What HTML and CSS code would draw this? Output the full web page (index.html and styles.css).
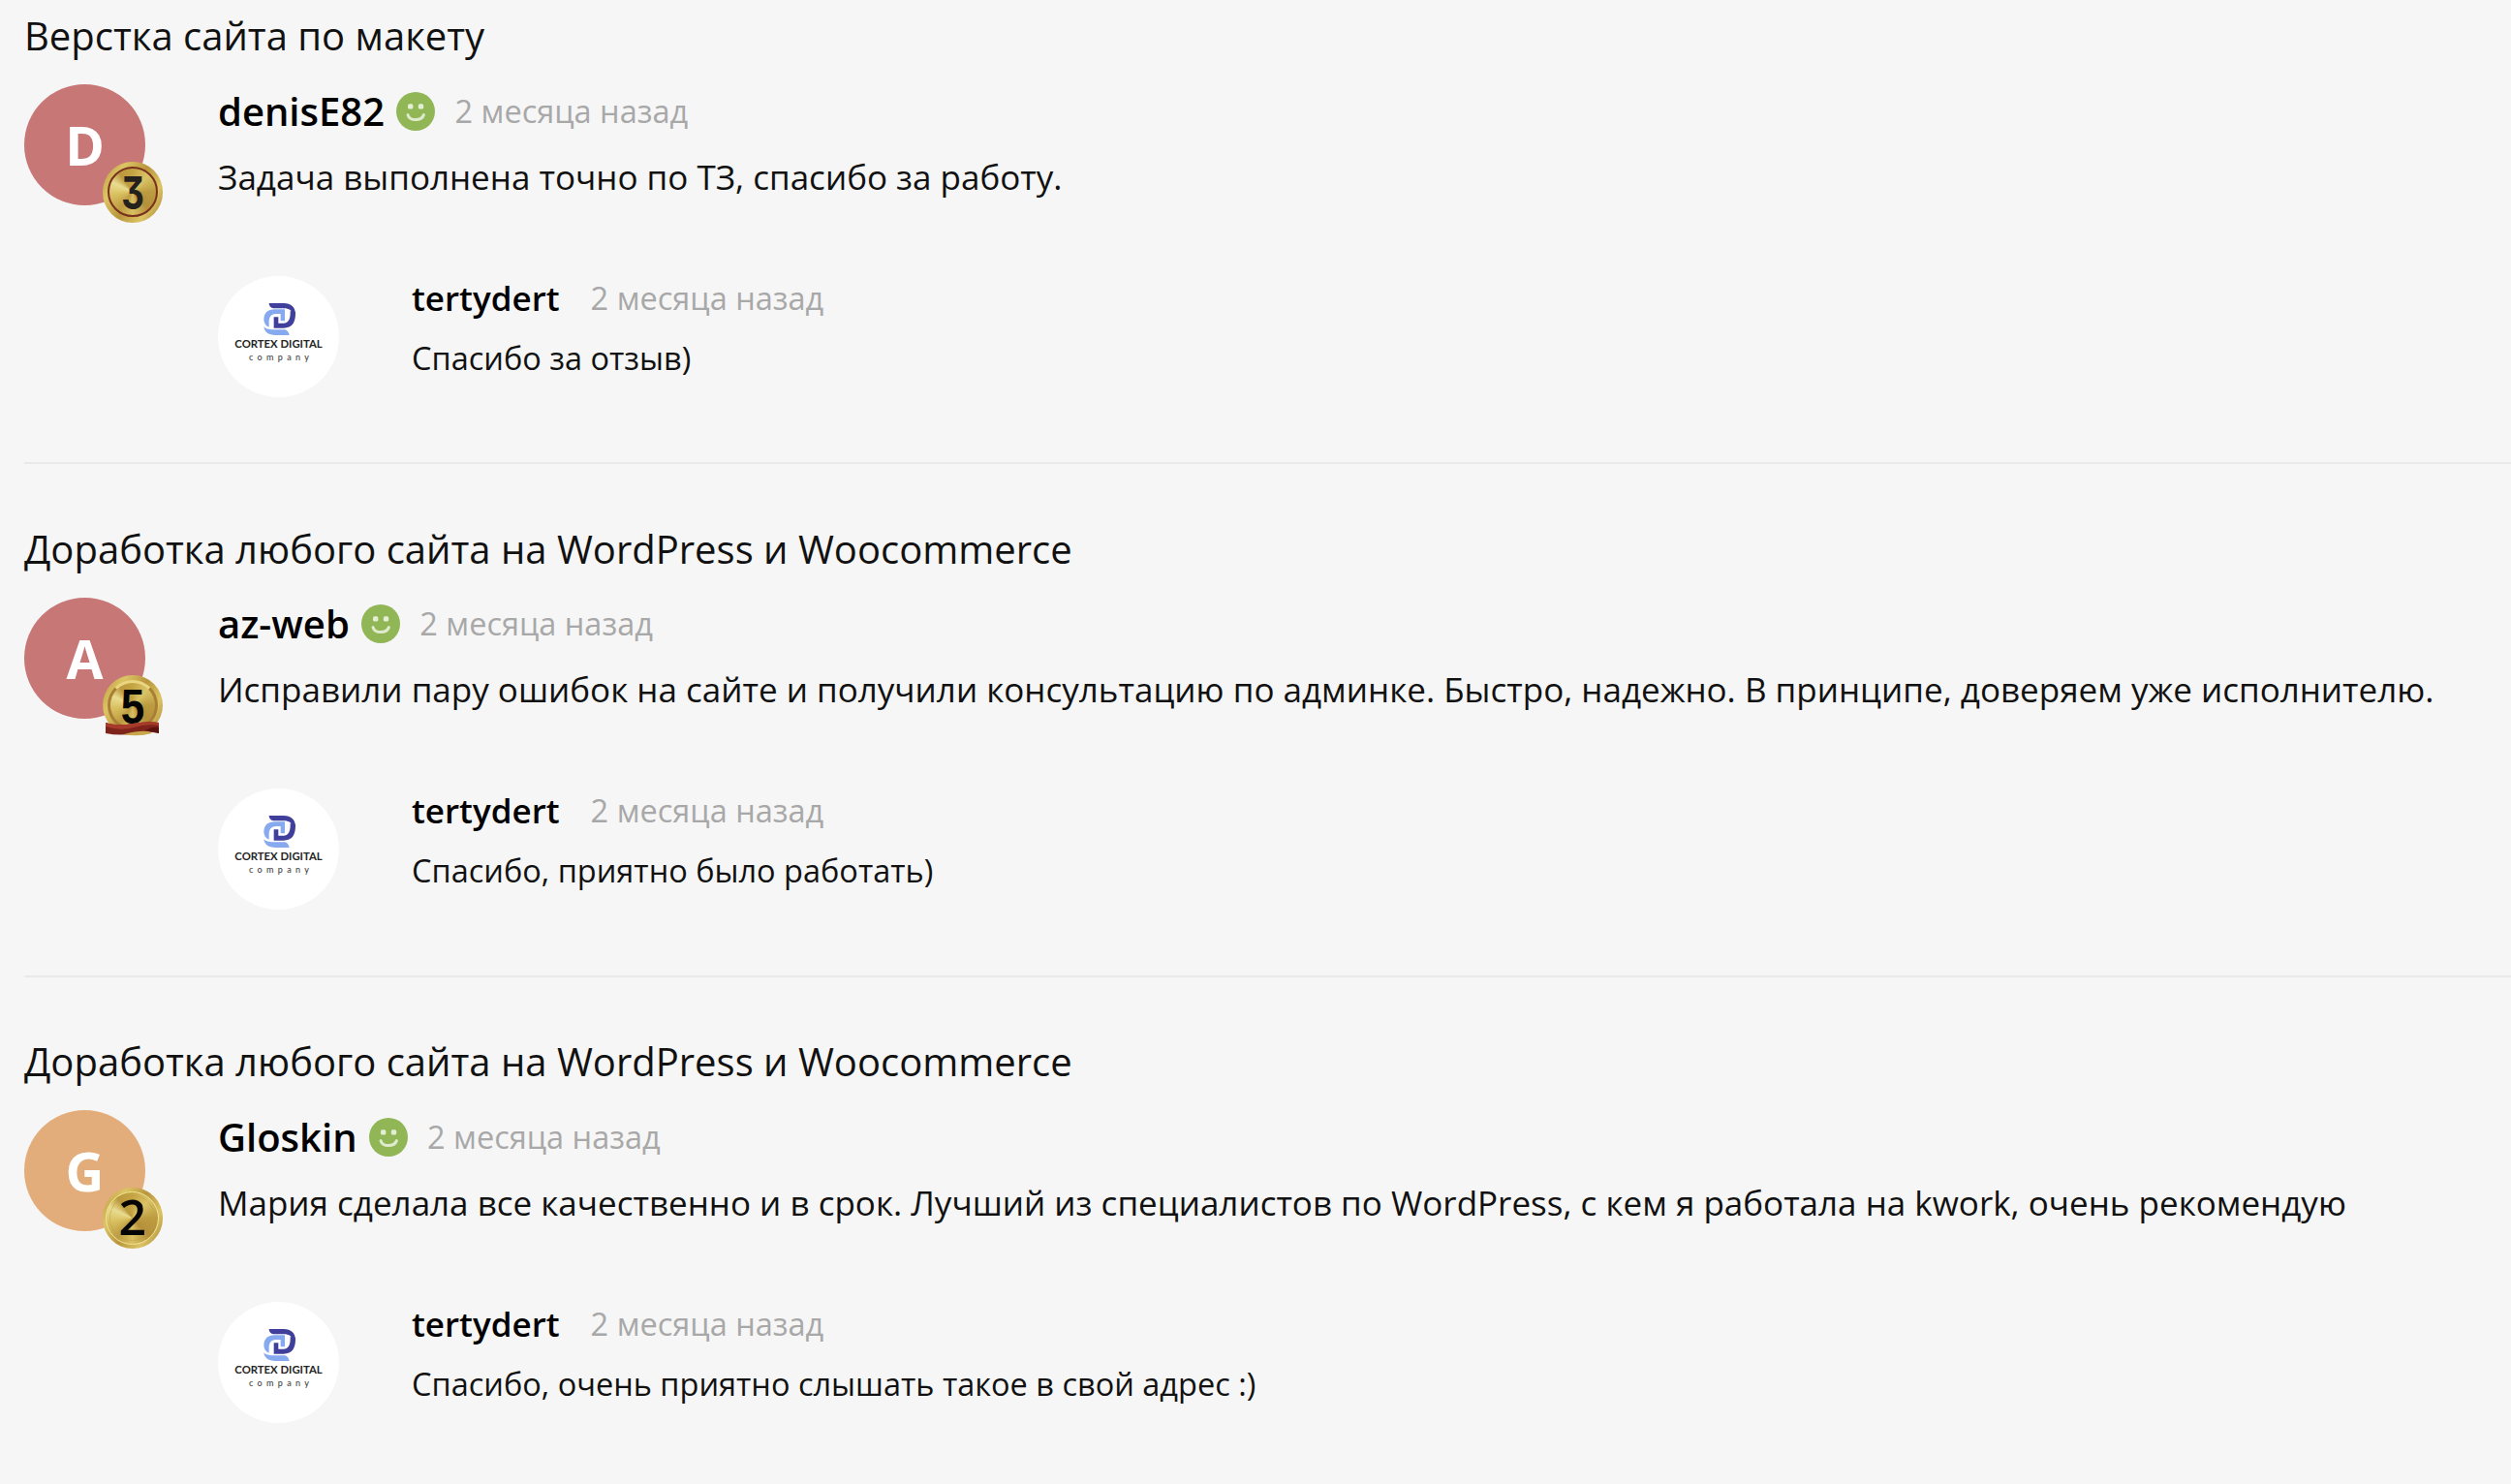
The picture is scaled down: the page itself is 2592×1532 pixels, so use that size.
FILE: index.html
```
<!DOCTYPE html>
<html lang="ru">
<head>
<meta charset="utf-8">
<title>Отзывы</title>
<link rel="stylesheet" href="styles.css">
</head>
<body>
<svg class="sprite" aria-hidden="true">
  <symbol id="smile" viewBox="0 0 40 40">
    <circle cx="20" cy="20" r="20" fill="#90b656"/>
    <g fill="#e3eed2"><rect x="12" y="12.3" width="5.4" height="5.2" rx="1.6"/><rect x="22.8" y="12.3" width="5.4" height="5.2" rx="1.6"/></g>
    <path d="M12 23.6Q13.5 28.6 20 28.6T28.4 23.6" fill="none" stroke="#dfebcc" stroke-width="3" stroke-linecap="round"/>
  </symbol>
  <symbol id="logo" viewBox="0 0 375 375">
    <circle cx="187.500" cy="187.500" r="187.500" fill="#fff"/>
    <path d="M158 84H204C226 84 240 96 240 118H231C228 107 221 100 204 100H176C164 100 158 93 158 84Z" fill="#40409c"/>
    <path d="M240 112C241 144 230 161 203 161H173V127H187V146H203C217 146 225 136 224 108Z" fill="#40409c"/>
    <path d="M207 103V139H194V117H180C166 117 158 125 158 142V158C148 154 142 145 142 134C143 113 155 103 176 103Z" fill="#87a9ef"/>
    <path d="M142 157C148 164 158 166 168 166H205C214 166 219 174 221 183H178C157 183 144 174 142 157Z" fill="#87a9ef"/>
    <text class="logo-name" x="52" y="223" textLength="271" lengthAdjust="spacingAndGlyphs">CORTEX DIGITAL</text>
    <text class="logo-sub" x="96" y="260" textLength="186">company</text>
  </symbol>
  <symbol id="ribbon" viewBox="0 0 63 63">
    <path d="M3 49Q15 53 31 50T58 49V60Q45 57 32 60T3 60Z" fill="#7e241a"/>
    <path d="M3 49Q15 53 31 50T58 49V52Q45 50 32 54T3 53Z" fill="#a63b2b"/>
    <path d="M43 58Q50 53 58 54V60Q50 57 43 58Z" fill="#5b130f"/>
    <path d="M22 61Q37 57 47 58L51 60Q36 64 22 61Z" fill="#c8a64c"/>
  </symbol>
</svg>

<main class="reviews">
  <article class="review">
    <h2 class="title">Верстка сайта по макету</h2>
    <div class="entry">
      <div class="avatar avatar-red">D
        <span class="medal medal-three"><span class="medal-face"><span class="digit">3</span></span></span>
      </div>
      <div class="content">
        <div class="meta"><b class="name">denisE82</b><svg class="smile"><use href="#smile"/></svg><time class="date">2 месяца назад</time></div>
        <p class="text">Задача выполнена точно по ТЗ, спасибо за работу.</p>
        <div class="reply">
          <svg class="logo"><use href="#logo"/></svg>
          <div class="reply-content">
            <div class="meta"><b class="reply-name">tertydert</b><time class="date">2 месяца назад</time></div>
            <p class="reply-text">Спасибо за отзыв)</p>
          </div>
        </div>
      </div>
    </div>
  </article>

  <article class="review">
    <h2 class="title">Доработка любого сайта на WordPress и Woocommerce</h2>
    <div class="entry">
      <div class="avatar avatar-red">A
        <span class="medal medal-five"><span class="medal-face"><span class="digit">5</span></span><svg class="ribbon"><use href="#ribbon"/></svg></span>
      </div>
      <div class="content">
        <div class="meta"><b class="name">az-web</b><svg class="smile"><use href="#smile"/></svg><time class="date">2 месяца назад</time></div>
        <p class="text">Исправили пару ошибок на сайте и получили консультацию по админке. Быстро, надежно. В принципе, доверяем уже исполнителю.</p>
        <div class="reply">
          <svg class="logo"><use href="#logo"/></svg>
          <div class="reply-content">
            <div class="meta"><b class="reply-name">tertydert</b><time class="date">2 месяца назад</time></div>
            <p class="reply-text">Спасибо, приятно было работать)</p>
          </div>
        </div>
      </div>
    </div>
  </article>

  <article class="review">
    <h2 class="title">Доработка любого сайта на WordPress и Woocommerce</h2>
    <div class="entry">
      <div class="avatar avatar-orange">G
        <span class="medal medal-two"><span class="medal-face"><span class="digit">2</span></span></span>
      </div>
      <div class="content">
        <div class="meta"><b class="name">Gloskin</b><svg class="smile"><use href="#smile"/></svg><time class="date">2 месяца назад</time></div>
        <p class="text">Мария сделала все качественно и в срок. Лучший из специалистов по WordPress, с кем я работала на kwork, очень рекомендую</p>
        <div class="reply">
          <svg class="logo"><use href="#logo"/></svg>
          <div class="reply-content">
            <div class="meta"><b class="reply-name">tertydert</b><time class="date">2 месяца назад</time></div>
            <p class="reply-text">Спасибо, очень приятно слышать такое в свой адрес :)</p>
          </div>
        </div>
      </div>
    </div>
  </article>
</main>
</body>
</html>
```
FILE: styles.css
```
* { box-sizing: border-box; }

body {
  margin: 0;
  background: #f6f6f6;
  color: #111;
  font-family: "Open Sans", "Noto Sans", sans-serif;
  line-height: 50px;
}

.sprite { display: none; }

.reviews {
  display: flex;
  flex-direction: column;
  gap: 62.5px;
  padding: 12px 0 0 25px;
}

.review {
  height: 467px;
  border-bottom: 2px solid #e9e9e9;
}

.review:last-child { border-bottom: 0; }

.title {
  margin: 0 0 25px;
  font-size: 40px;
  font-weight: 400;
}

.entry {
  display: flex;
  gap: 75px;
}

.avatar {
  position: relative;
  flex: none;
  width: 125px;
  height: 125px;
  border-radius: 50%;
  color: #fff;
  font-size: 55px;
  font-weight: 700;
  line-height: 125px;
  text-align: center;
}

.avatar-red { background: #c87777; }
.avatar-orange { background: #e3ad7b; }

.content { padding-top: 2.5px; }

.meta {
  display: flex;
  align-items: center;
  height: 50px;
  white-space: nowrap;
}

.name {
  color: #000;
  font-size: 40px;
  font-weight: 600;
}

.smile {
  width: 40px;
  height: 40px;
  margin: 0 20.5px 0 12px;
}

.date {
  color: #a8a8a8;
  font-size: 32.5px;
}

.text {
  margin: 18px 0 0;
  font-size: 35px;
  white-space: nowrap;
}

.reply {
  display: flex;
  gap: 75px;
  margin-top: 77px;
}

.logo {
  flex: none;
  width: 125px;
  height: 125px;
}

.logo-name {
  fill: #252525;
  font: 700 31px Lato, sans-serif;
}

.logo-sub {
  fill: #444;
  font: 500 27px Lato, sans-serif;
}

.reply-content { margin-top: -2px; }

.reply-name {
  margin-right: 32px;
  color: #000;
  font-size: 35px;
  font-weight: 600;
}

.reply-text {
  margin: 12px 0 0;
  font-size: 32.5px;
  white-space: nowrap;
}

/* Level medals overlap the lower right edge of the avatar */
.medal {
  position: absolute;
  left: 80.5px;
  top: 80px;
  display: flex;
  align-items: center;
  justify-content: center;
  width: 62.5px;
  height: 62.5px;
  border-radius: 50%;
  background: linear-gradient(120deg, #b9953a, #dcc565 25%, #b9963c 50%, #dcc464 75%, #a27d2c);
  color: #050505;
}

.medal-face {
  display: flex;
  flex: none;
  align-items: center;
  justify-content: center;
  width: 52px;
  height: 52px;
  border-radius: 50%;
  background: conic-gradient(#c4a443, #d9c367 12%, #bd9c40 25%, #b58f3b 38%, #d8c060 50%, #bd9b43 60%, #d8bf5e 72%, #e9dc90 82%, #bb983d 90%, #c4a443);
}

.digit { display: block; }

.medal-three .medal-face {
  border: 2px solid #79301c;
  color: #25221d;
  font: 700 47px/1 Inter, sans-serif;
  font-feature-settings: "cv09";
}

.medal-three .digit { transform: scaleX(0.78); }

.medal-five .medal-face {
  border: 3px solid #a97f35;
  border-top-color: #ead580;
  font: 700 50px/1 "Liberation Sans", sans-serif;
}

.medal-five .digit { transform: translateY(2px) scaleX(0.88); }

.medal-two .medal-face {
  width: 55px;
  height: 55px;
  border: 1px solid #f0e394;
  outline: 1px dotted #bd9e43;
  outline-offset: -5px;
  font: 650 50px/1 "Open Sans", sans-serif;
}

.medal-two .digit { transform: translateY(-1.5px); }

.ribbon {
  position: absolute;
  inset: 0;
  width: 63px;
  height: 63px;
}
```
